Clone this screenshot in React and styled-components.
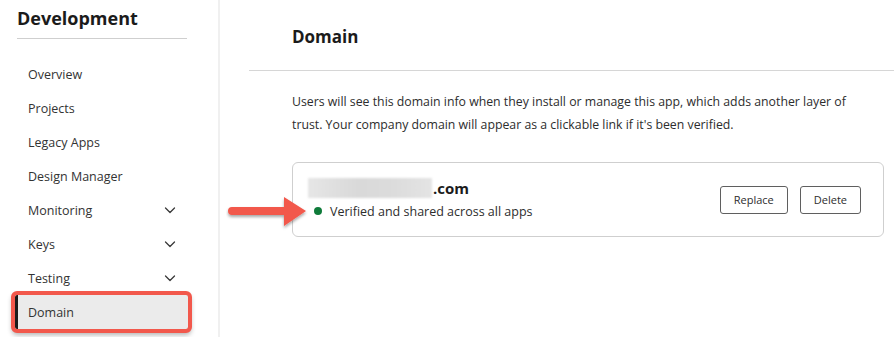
import React from 'react'
import styled, { createGlobalStyle } from 'styled-components'

const GlobalStyle = createGlobalStyle`
  html, body { margin: 0; padding: 0; background: #fff; }
  body {
    font-family: "Open Sans", "Noto Sans", sans-serif;
    color: #2d2d2d;
  }
`

const navItems = [
  { label: 'Overview' },
  { label: 'Projects' },
  { label: 'Legacy Apps' },
  { label: 'Design Manager' },
  { label: 'Monitoring', caret: true },
  { label: 'Keys', caret: true },
  { label: 'Testing', caret: true },
  { label: 'Domain', active: true },
]

const Chevron = () => (
  <svg width="12" height="12" viewBox="0 0 12 12" fill="none">
    <path d="M1.5 4 L6 8.5 L10.5 4" stroke="#3a3a3a" strokeWidth="1.3" strokeLinecap="round" strokeLinejoin="round" />
  </svg>
)

const App = () => {
  return (
    <Page>
      <GlobalStyle />
      <Sidebar>
        <SideTitle>Development</SideTitle>
        <Nav>
          {navItems.map((item) => (
            <NavItem key={item.label} $active={item.active}>
              <span>{item.label}</span>
              {item.caret && <Chevron />}
            </NavItem>
          ))}
        </Nav>
      </Sidebar>
      <Main>
        <Header>
          <h1>Domain</h1>
        </Header>
        <Content>
          <Description>
            Users will see this domain info when they install or manage this app, which adds another layer of
            <br />
            trust. Your company domain will appear as a clickable link if it's been verified.
          </Description>
          <Card>
            <DomainInfo>
              <DomainName>
                <Blur />
                .com
              </DomainName>
              <Status>
                <Dot />
                Verified and shared across all apps
              </Status>
              <Arrow width="86" height="40" viewBox="0 0 86 40">
                <defs>
                  <filter id="sh" x="-20%" y="-30%" width="140%" height="170%">
                    <feDropShadow dx="0" dy="2" stdDeviation="1.5" floodColor="#000" floodOpacity="0.35" />
                  </filter>
                </defs>
                <g filter="url(#sh)">
                  <path d="M6 15 H58 V5 L80 19 L58 34 V23 H6 A4 4 0 0 1 6 15 Z" fill="#f2584c" />
                </g>
              </Arrow>
            </DomainInfo>
            <Actions>
              <Button>Replace</Button>
              <Button>Delete</Button>
            </Actions>
          </Card>
        </Content>
      </Main>
    </Page>
  )
}

export default App

const Page = styled.div`
  display: flex;
  width: 894px;
  height: 337px;
  overflow: hidden;
`

const Sidebar = styled.aside`
  width: 220px;
  flex-shrink: 0;
  border-right: 2px solid #f0f0f0;
  padding: 6px 31px 0 17px;
  box-sizing: border-box;
`

const SideTitle = styled.div`
  font-family: "Open Sans", sans-serif;
  font-weight: 700;
  font-size: 18px;
  color: #1b1b1b;
  padding-bottom: 8px;
  border-bottom: 1px solid #cfcfcf;
`

const Nav = styled.nav`
  display: flex;
  flex-direction: column;
  margin-top: 18px;
`

const NavItem = styled.div`
  display: flex;
  align-items: center;
  justify-content: space-between;
  height: 34px;
  padding: 0 11px 0 11px;
  font-size: 12.5px;
  color: #333;
  box-sizing: border-box;
  ${({ $active }) =>
    $active &&
    `
    margin-left: -2px;
    margin-right: -1px;
    padding-left: 10px;
    background: #ebebeb;
    border-left: 3px solid #1b1b1b;
    outline: 4px solid #f2584c;
    outline-offset: 0px;
    border-radius: 2px;
    box-shadow: 0 3px 5px 3px rgba(0,0,0,0.3);
  `}
`

const Main = styled.main`
  flex: 1;
  display: flex;
  flex-direction: column;
`

const Header = styled.div`
  margin-left: 29px;
  border-bottom: 1px solid #d6d6d6;
  padding: 25px 0 0 43px;
  height: 71px;
  box-sizing: border-box;
  & > h1 {
    margin: 0;
    font-size: 17px;
    font-weight: 700;
    color: #1b1b1b;
  }
`

const Content = styled.div`
  padding: 19px 10px 0 72px;
`

const Description = styled.p`
  margin: 0;
  white-space: nowrap;
  font-size: 12.3px;
  line-height: 23px;
  color: #2d2d2d;
`

const Card = styled.div`
  margin-top: 26px;
  height: 75px;
  box-sizing: border-box;
  border: 1px solid #cfcfcf;
  border-radius: 6px;
  display: flex;
  align-items: center;
  justify-content: space-between;
  padding: 0 22px 0 15px;
`

const DomainInfo = styled.div`
  position: relative;
  display: flex;
  flex-direction: column;
  gap: 5px;
  margin-top: -2px;
`

const DomainName = styled.div`
  display: flex;
  align-items: center;
  font-size: 15px;
  font-weight: 700;
  color: #1b1b1b;
`

const Blur = styled.span`
  display: inline-block;
  width: 124px;
  height: 20px;
  margin-right: 1px;
  background: linear-gradient(90deg, #e6e6e6, #d9d9d9 40%, #dcdcdc 70%, #e4e4e4);
  filter: blur(1px);
`

const Status = styled.div`
  display: flex;
  align-items: center;
  gap: 8px;
  font-size: 12.5px;
  color: #2d2d2d;
  padding-left: 6px;
`

const Dot = styled.span`
  width: 8px;
  height: 8px;
  border-radius: 50%;
  background: #0f7b3a;
`

const Arrow = styled.svg`
  position: absolute;
  left: -82px;
  top: 14px;
`

const Actions = styled.div`
  display: flex;
  gap: 12px;
`

const Button = styled.button`
  font-family: "Open Sans", sans-serif;
  font-size: 11px;
  color: #2d2d2d;
  background: #fff;
  border: 1px solid #5f5f5f;
  border-radius: 3px;
  height: 28px;
  padding: 0 13px;
`
